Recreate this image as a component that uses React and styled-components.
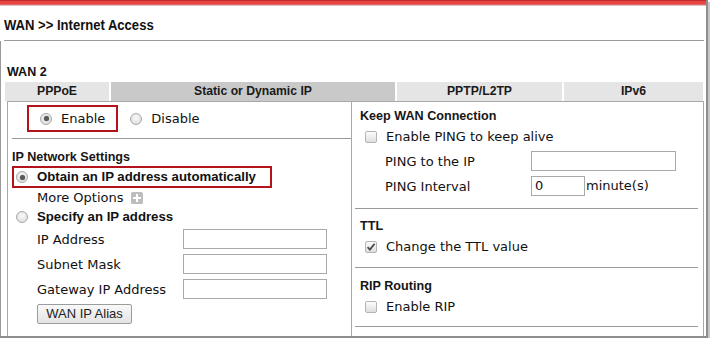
import React from "react";
import styled, { createGlobalStyle } from "styled-components";

const Global = createGlobalStyle`
  html, body { margin: 0; padding: 0; background: #fff; }
  body { font-family: "DejaVu Sans", Verdana, sans-serif; color: #111; }
`;

const Frame = styled.div`
  box-sizing: border-box;
  width: 708px;
  height: 338px;
  border-right: 2px solid #8e8e8e;
  border-bottom: 2px solid #8e8e8e;
  box-shadow: 2px 2px 0 #c6c6c6;
  display: flex;
  flex-direction: column;
  overflow: hidden;
`;

const TopBar = styled.div`
  height: 6px;
  flex: none;
  background: linear-gradient(#b91f1f 0, #ef4a4a 2px, #e83c3c 4px, #d79a9a 5px, #e4e4e4 6px);
`;

const Title = styled.div`
  padding: 4px 0 0 4px;
  height: 30px;
  line-height: 30px;
  font-family: "Liberation Sans Narrow", "Liberation Sans", Arial, sans-serif;
  font-weight: 700;
  font-size: 14.5px;
  color: #111;
`;

const TitleText = styled.span`
  display: inline-block;
  transform: scaleX(0.9);
  transform-origin: left center;
`;

const Rule = styled.div`
  height: 1px;
  background: #9a9a9a;
  margin: ${(p) => p.$m || "0"};
  flex: none;
`;

const Body = styled.div`
  flex: 1;
  display: flex;
  flex-direction: column;
  border-left: 1px solid #9a9a9a;
  min-height: 0;
`;

const WanLabel = styled.div`
  margin: 23px 0 2px 6px;
  line-height: 16px;
  font-family: "Liberation Sans", Arial, sans-serif;
  font-weight: 700;
  font-size: 12.5px;
`;

const Tabs = styled.div`
  display: flex;
  gap: 2px;
  margin-left: 4px;
  height: 19px;
`;

const Tab = styled.div`
  width: ${(p) => p.$w}px;
  background: ${(p) => (p.$active ? "#c9c9c9" : "#e5e5e5")};
  text-align: center;
  line-height: 19px;
  font-family: "Liberation Sans", Arial, sans-serif;
  font-weight: 700;
  font-size: 12.2px;
  color: #1a1a1a;
`;

const Panel = styled.div`
  flex: 1;
  margin: 0 2px 0 6px;
  border: 1px solid #a8a8a8;
  border-bottom: none;
  display: grid;
  grid-template-columns: 344px 351px;
`;

const LeftCell = styled.div`
  border-right: 1px solid #a8a8a8;
  padding-left: 4px;
  display: flex;
  flex-direction: column;
`;

const RightCell = styled.div`
  padding: 0 5px 0 3px;
  display: flex;
  flex-direction: column;
`;

const Text = styled.span`
  font-size: 13px;
  line-height: 18px;
  white-space: nowrap;
`;

const Row = styled.div`
  display: flex;
  align-items: center;
  height: ${(p) => p.$h || 18}px;
  margin: ${(p) => p.$m || "0"};
  padding-left: ${(p) => p.$pl || 0}px;
  gap: ${(p) => p.$gap || 0}px;
`;

const Outline = styled.div`
  display: flex;
  align-items: center;
  box-sizing: border-box;
  height: ${(p) => p.$h}px;
  border: 2px solid #b3141c;
  padding: 0 ${(p) => p.$pr}px 0 ${(p) => p.$pl}px;
  gap: 9px;
  width: fit-content;
`;

const Radio = styled.span`
  box-sizing: border-box;
  width: 12px;
  height: 12px;
  border-radius: 50%;
  border: 1px solid #a9a9a9;
  background: radial-gradient(circle at 50% 40%, #fafafa 0, #e2e2e2 70%, #d2d2d2 100%);
  display: inline-flex;
  align-items: center;
  justify-content: center;
  flex: none;
  &::after {
    content: "";
    display: ${(p) => (p.$checked ? "block" : "none")};
    width: 5px;
    height: 5px;
    border-radius: 50%;
    background: #595959;
    box-shadow: 0 0 1px #777;
  }
`;

const Heading = styled.div`
  font-family: "Liberation Sans", Arial, sans-serif;
  font-weight: 700;
  font-size: 12.6px;
  line-height: 18px;
  margin: ${(p) => p.$m || "0"};
  color: #161616;
`;

const Bold = styled.span`
  font-family: "Liberation Sans", Arial, sans-serif;
  font-weight: 700;
  font-size: 13.2px;
  line-height: 18px;
  white-space: nowrap;
  color: #111;
`;

const Label = styled.span`
  width: ${(p) => p.$w || 146}px;
  flex: none;
  font-size: 13px;
  white-space: nowrap;
`;

const Input = styled.div`
  box-sizing: border-box;
  width: ${(p) => p.$w}px;
  height: 20px;
  border: 1px solid #a9a9a9;
  background: #fff;
  font-size: 13px;
  line-height: 18px;
  padding-left: 3px;
  flex: none;
`;

const Button = styled.div`
  box-sizing: border-box;
  width: 95px;
  height: 20px;
  border: 1px solid #9c9c9c;
  border-radius: 2px;
  background: linear-gradient(#f9f9f9, #e3e3e3);
  font-family: "Liberation Sans", Arial, sans-serif;
  font-size: 13px;
  line-height: 18px;
  text-align: center;
  margin: 5px 0 0 25px;
  color: #222;
`;

const Box = styled.span`
  box-sizing: border-box;
  width: 12px;
  height: 12px;
  border: 1px solid #b4b4b4;
  border-radius: 2px;
  background: linear-gradient(#fdfdfd, #dedede);
  display: inline-flex;
  align-items: center;
  justify-content: center;
  flex: none;
`;

const Check = ({ checked }) => (
  <Box>
    {checked && (
      <svg width="10" height="10" viewBox="0 0 10 10">
        <path d="M1.6 5.2 L3.9 7.6 L8.6 1.8" fill="none" stroke="#4a4a4a" strokeWidth="1.8" />
      </svg>
    )}
  </Box>
);

const Plus = () => (
  <svg width="12" height="12" viewBox="0 0 12 12" style={{ marginLeft: 7, flex: "none" }}>
    <rect x="0" y="0" width="12" height="12" rx="1.5" fill="#bdbdbd" />
    <rect x="5" y="2" width="2" height="8" fill="#fff" />
    <rect x="2" y="5" width="8" height="2" fill="#fff" />
  </svg>
);

export default function App() {
  return (
    <>
      <Global />
      <Frame>
        <TopBar />
        <Title>
          <TitleText>WAN &gt;&gt; Internet Access</TitleText>
        </Title>
        <Rule $m="0 2px 0 4px" />
        <Body>
          <WanLabel>WAN 2</WanLabel>
          <Tabs>
            <Tab $w={104}>PPPoE</Tab>
            <Tab $w={284} $active>Static or Dynamic IP</Tab>
            <Tab $w={165}>PPTP/L2TP</Tab>
            <Tab $w={139}>IPv6</Tab>
          </Tabs>
          <Panel>
            <LeftCell>
              <Row $h={27} $m="3px 0 6px 15px" $gap={12}>
                <Outline $h={27} $pl={11} $pr={11}>
                  <Radio $checked />
                  <Text>Enable</Text>
                </Outline>
                <Radio />
                <Text style={{ marginLeft: -3 }}>Disable</Text>
              </Row>
              <Rule />
              <Heading $m="9px 0 0 0">IP Network Settings</Heading>
              <Outline $h={22} $pl={2} $pr={14}>
                <Radio $checked />
                <Bold>Obtain an IP address automatically</Bold>
              </Outline>
              <Row $pl={25} $m="1px 0 0 0">
                <Text>More Options</Text>
                <Plus />
              </Row>
              <Row $h={20} $pl={4} $gap={9}>
                <Radio />
                <Bold>Specify an IP address</Bold>
              </Row>
              <Row $h={20} $pl={25} $m="2px 0 0 0">
                <Label>IP Address</Label>
                <Input $w={144} />
              </Row>
              <Row $h={20} $pl={25} $m="5px 0 0 0">
                <Label>Subnet Mask</Label>
                <Input $w={144} />
              </Row>
              <Row $h={20} $pl={25} $m="5px 0 0 0">
                <Label>Gateway IP Address</Label>
                <Input $w={144} />
              </Row>
              <Button>WAN IP Alias</Button>
            </LeftCell>
            <RightCell>
              <Heading $m="5px 0 0 5px">Keep WAN Connection</Heading>
              <Row $pl={10} $gap={9} $m="3px 0 0 0">
                <Check />
                <Text>Enable PING to keep alive</Text>
              </Row>
              <Row $h={20} $pl={30} $m="5px 0 0 0">
                <Label>PING to the IP</Label>
                <Input $w={145} />
              </Row>
              <Row $h={20} $pl={30} $m="5px 0 0 0">
                <Label>PING Interval</Label>
                <Input $w={54}>0</Input>
                <Text style={{ marginLeft: 1 }}>minute(s)</Text>
              </Row>
              <Rule $m="12px 0 0 0" />
              <Heading $m="8px 0 0 5px">TTL</Heading>
              <Row $pl={10} $gap={9} $m="3px 0 0 0">
                <Check checked />
                <Text>Change the TTL value</Text>
              </Row>
              <Rule $m="11px 0 0 0" />
              <Heading $m="9px 0 0 5px">RIP Routing</Heading>
              <Row $pl={10} $gap={9} $m="3px 0 0 0">
                <Check />
                <Text>Enable RIP</Text>
              </Row>
              <Rule $m="10px 0 0 0" />
            </RightCell>
          </Panel>
        </Body>
      </Frame>
    </>
  );
}
